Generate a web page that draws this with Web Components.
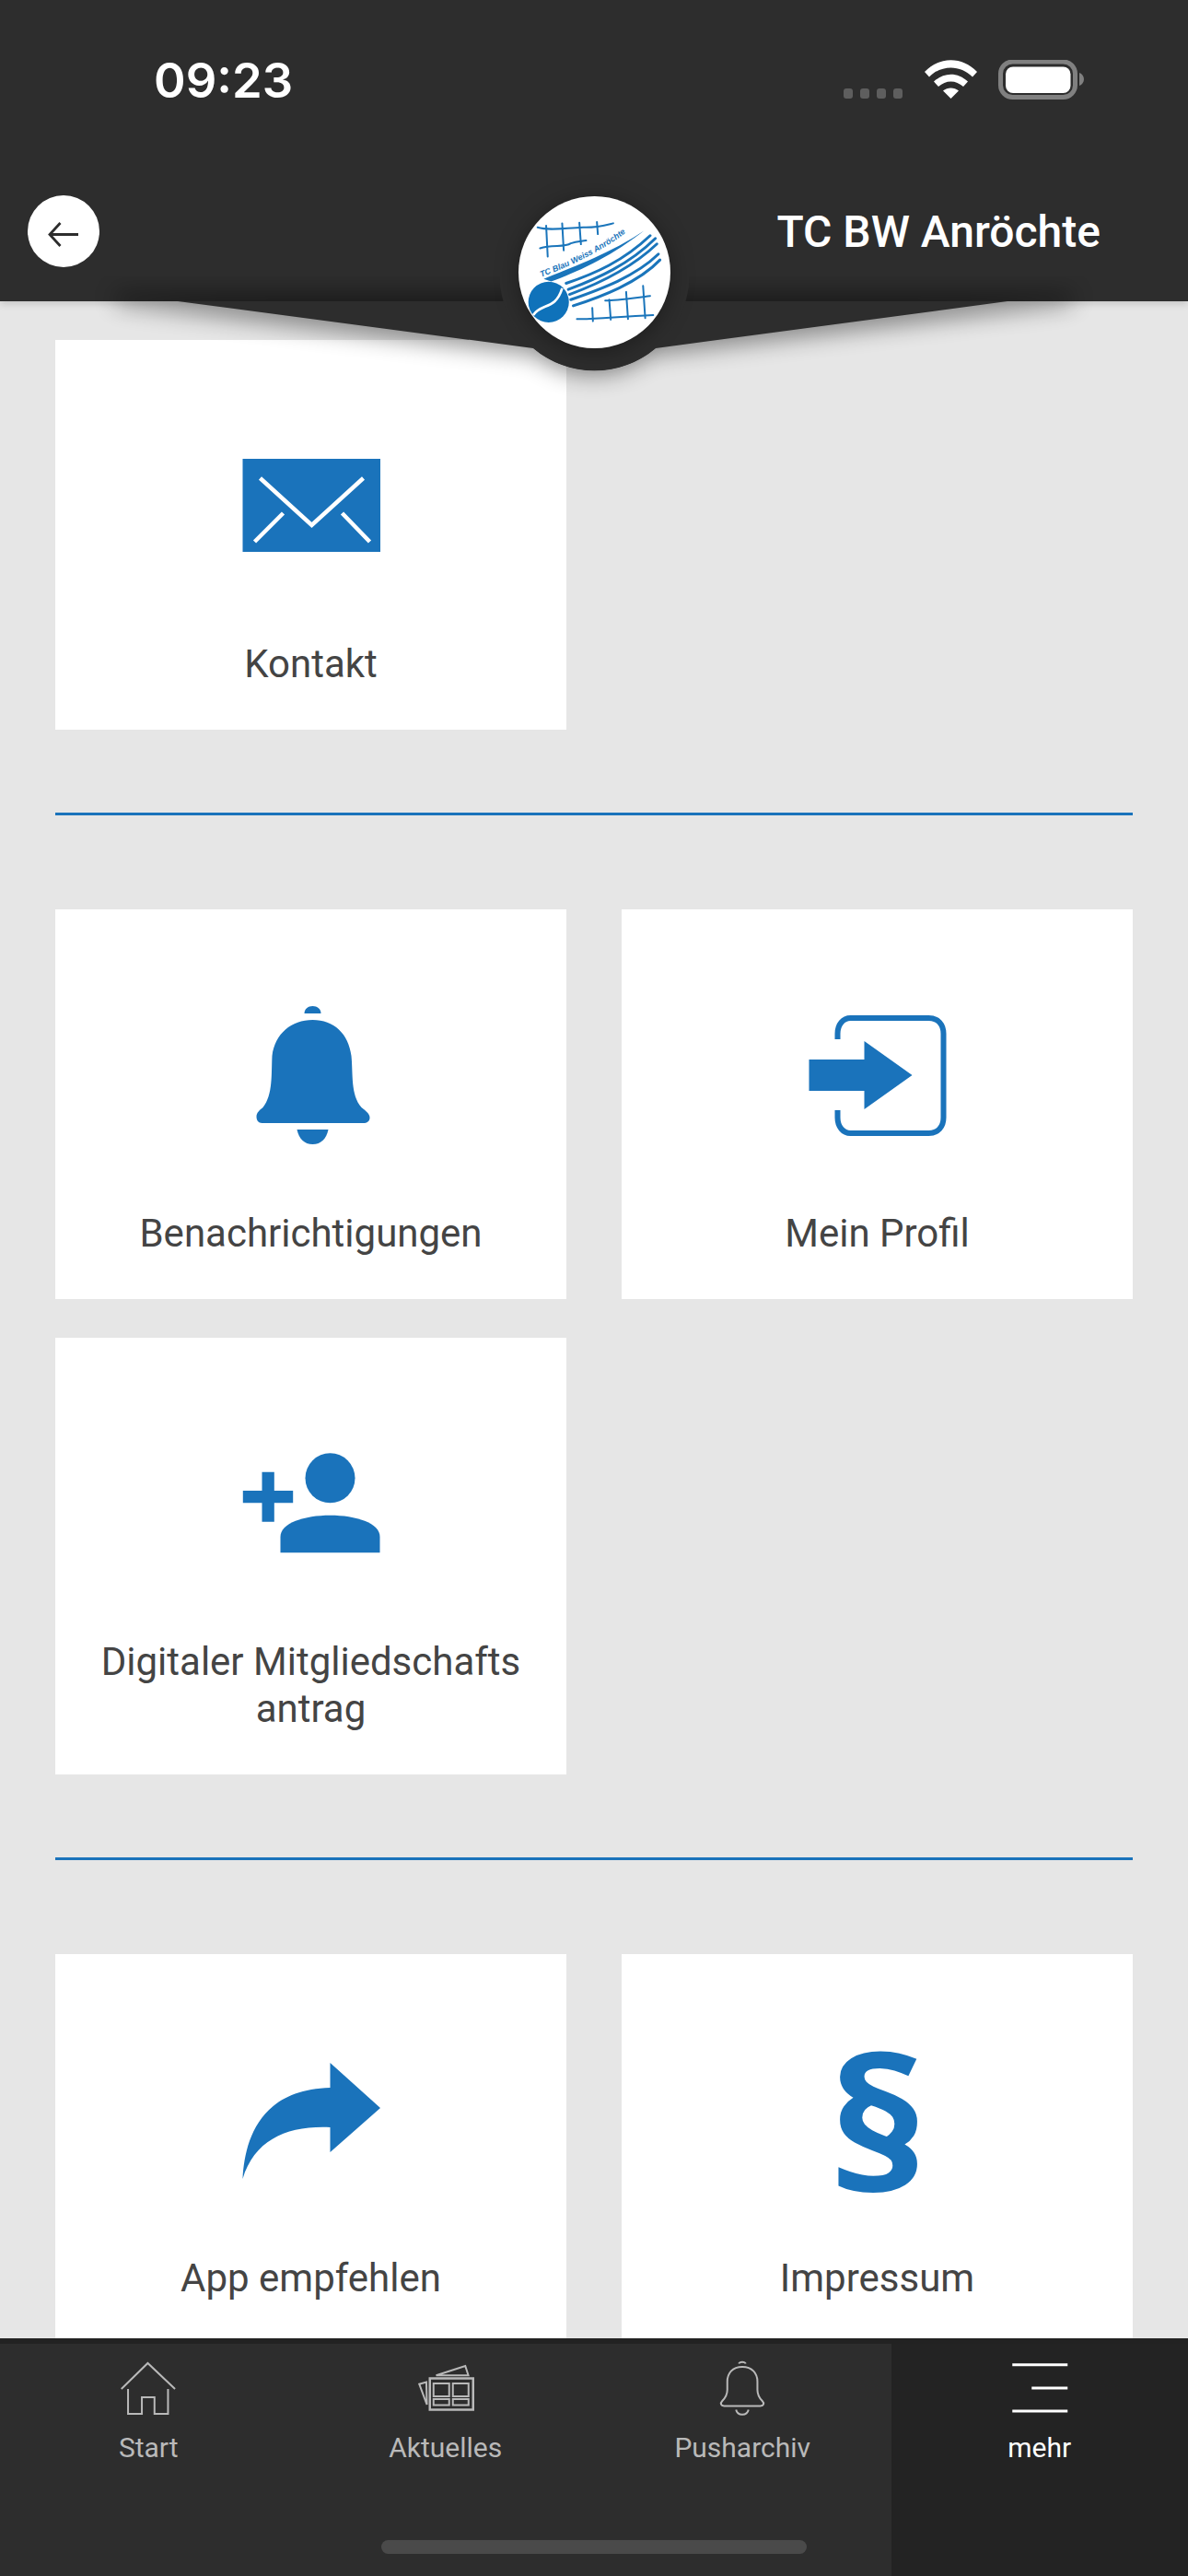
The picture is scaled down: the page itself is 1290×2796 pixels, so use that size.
<!DOCTYPE html>
<html lang="de">
<head>
<meta charset="utf-8">
<title>TC BW Anröchte</title>
<style>
    html, body { margin: 0; padding: 0; }
    body {
        width: 1290px;
        height: 2796px;
        overflow: hidden;
        background: #e6e6e6;
        font-family: Roboto, "Liberation Sans", sans-serif;
    }
    tile-card svg { display: block; width: 150px; height: 150px; }
    tile-card .glyph {
        display: block;
        width: 150px;
        height: 150px;
        text-align: center;
        color: #1a73bb;
        font: 700 198px/150px "Open Sans", sans-serif;
        transform: scaleX(1.12);
    }
</style>
</head>
<body>

<app-screen>
    <app-header slot="header" title-text="TC BW Anröchte"></app-header>

    <tile-grid>
        <tile-card>
            <svg slot="icon" viewBox="262.5 474 150 150">
                <rect x="263" y="498" width="150" height="101" fill="#1a73bb"/>
                <path d="M282 519 L338 570 L394 519 M276 588 L307 557 M401 588 L371 557" fill="none" stroke="#fff" stroke-width="4.5"/>
            </svg>
            Kontakt
        </tile-card>
    </tile-grid>
    <tile-divider></tile-divider>

    <tile-grid>
        <tile-card>
            <svg slot="icon" viewBox="262.5 1092 150 150" fill="#1a73bb">
                <path d="M330 1100 C330 1095 334 1092 339 1092 C344 1092 348 1095 348 1100 Z"/>
                <path d="M339 1107 C362 1107 378 1122 381 1146 C383 1166 380 1188 392 1202 C397 1206 401 1209 401 1213 C401 1217 398 1219 394 1219 L284 1219 C280 1219 278 1216 278 1212 C278 1208 281 1205 285 1202 C296 1188 294 1166 295 1146 C298 1122 316 1107 339 1107 Z"/>
                <path d="M322 1226 L356 1226 C354 1236 348 1242 339 1242 C330 1242 324 1236 322 1226 Z"/>
            </svg>
            Benachrichtigungen
        </tile-card>
        <tile-card>
            <svg slot="icon" viewBox="877.5 1092 150 150">
                <path d="M909 1128 L909 1122 C909 1112 915 1105 923 1105 L1008 1105 C1018 1105 1024 1112 1024 1122 L1024 1213 C1024 1223 1018 1230 1008 1230 L923 1230 C915 1230 909 1223 909 1213 L909 1205" fill="none" stroke="#1a73bb" stroke-width="6"/>
                <path d="M878 1150 L938 1150 L938 1130 L990 1167 L938 1204 L938 1184 L878 1184 Z" fill="#1a73bb"/>
            </svg>
            Mein Profil
        </tile-card>
        <tile-card>
            <svg slot="icon" viewBox="262.5 1557 150 150" fill="#1a73bb">
                <circle cx="358" cy="1604.3" r="27"/>
                <path d="M304 1685.3 L304 1668 C304 1653 330 1644.7 358 1644.7 C386 1644.7 412 1653 412 1668 L412 1685.3 Z"/>
                <path d="M263.3 1618 L284 1618 L284 1597.7 L297.3 1597.7 L297.3 1618 L317.7 1618 L317.7 1631.3 L297.3 1631.3 L297.3 1651.7 L284 1651.7 L284 1631.3 L263.3 1631.3 Z"/>
            </svg>
            Digitaler Mitgliedschafts<br>antrag
        </tile-card>
    </tile-grid>
    <tile-divider></tile-divider>

    <tile-grid>
        <tile-card>
            <svg slot="icon" viewBox="262.5 2226 150 150" fill="#1a73bb">
                <path d="M358 2239 L412.5 2288 L358 2336 L358 2309 C312 2307 276 2322 263 2365 C265 2325 280 2268 358 2266 Z"/>
            </svg>
            App empfehlen
        </tile-card>
        <tile-card>
            <span slot="icon" class="glyph">§</span>
            Impressum
        </tile-card>
    </tile-grid>

    <tab-bar slot="footer">
        <tab-item label="Start">
            <svg viewBox="129.25 2560 64 64" fill="none" stroke="#b9b9b9" stroke-width="2">
                <path d="M132 2593 L160.7 2565 L190.3 2593"/>
                <path d="M139.3 2593 L139.3 2620 L154.3 2620 L154.3 2602 L168 2602 L168 2620 L182.7 2620 L182.7 2593"/>
            </svg>
        </tab-item>
        <tab-item label="Aktuelles">
            <svg viewBox="451.75 2560 64 64" fill="none" stroke="#b9b9b9" stroke-width="2">
                <rect x="466.5" y="2581.5" width="47" height="34" stroke-width="2.5"/>
                <rect x="470.5" y="2587" width="17" height="14" stroke-width="2"/>
                <rect x="491.5" y="2587" width="17" height="14" stroke-width="2"/>
                <rect x="470.5" y="2604" width="17" height="6.5" stroke-width="2"/>
                <rect x="491.5" y="2604" width="17" height="6.5" stroke-width="2"/>
                <path d="M473.3 2578.3 L505 2568 L508.3 2578.3 Z"/>
                <path d="M463.3 2610 L455 2587.7 L462.7 2585.5 Z"/>
            </svg>
        </tab-item>
        <tab-item label="Pusharchiv">
            <svg viewBox="774.25 2560 64 64" fill="none" stroke="#b9b9b9" stroke-width="2">
                <path d="M802.5 2565.5 C803.5 2563 809 2563 810 2565.5"/>
                <path d="M806.3 2569 C817 2569 822.7 2576 822.7 2585 L822.7 2594 C822.7 2600 825 2603 828 2606 C830.5 2608.5 829.5 2611.5 826 2611.5 L786.5 2611.5 C783 2611.5 782 2608.5 784.5 2606 C787.5 2603 790 2600 790 2594 L790 2585 C790 2576 795.5 2569 806.3 2569 Z"/>
                <path d="M799.5 2615.5 C801 2622.5 811.5 2622.5 813 2615.5"/>
            </svg>
        </tab-item>
        <tab-item label="mehr" active>
            <svg viewBox="1096.75 2560 64 64" fill="none" stroke="#fff" stroke-width="3">
                <path d="M1099 2566.7 L1159 2566.7 M1120 2592 L1159 2592 M1099 2617 L1159 2617"/>
            </svg>
        </tab-item>
    </tab-bar>
</app-screen>

<script>
const screenTemplate = document.createElement('template');
screenTemplate.innerHTML = `
    <style>
        :host {
            display: flex;
            flex-direction: column;
            width: 1290px;
            height: 2796px;
            overflow: hidden;
            background: #e6e6e6;
        }
        main {
            flex: 1;
            min-height: 0;
            overflow: hidden;
            padding: 42px 60px 0;
        }
    </style>
    <slot name="header"></slot>
    <main><slot></slot></main>
    <slot name="footer"></slot>
`;

class AppScreen extends HTMLElement {
    constructor() {
        super();
        this.attachShadow({ mode: 'open' })
            .appendChild(screenTemplate.content.cloneNode(true));
    }
}

const headerTemplate = document.createElement('template');
headerTemplate.innerHTML = `
    <style>
        :host {
            display: block;
            position: relative;
            z-index: 10;
            height: 327px;
            background: #2d2d2d;
            color: #fff;
            box-shadow: 0 3px 8px rgba(0, 0, 0, .15);
        }
        .status {
            height: 174px;
            display: flex;
            align-items: center;
            justify-content: space-between;
            padding: 0 113px 0 167px;
        }
        .time {
            font: 600 52.5px/1 Inter, "Liberation Sans", sans-serif;
        }
        .status svg { display: block; width: 261px; height: 44px; }
        .bar {
            height: 153px;
            display: flex;
            align-items: center;
            justify-content: space-between;
            padding: 0 95px 0 30px;
        }
        .back {
            width: 78px;
            height: 78px;
            border-radius: 50%;
            background: #fff;
            display: grid;
            place-content: center;
        }
        .back svg { display: block; width: 36px; height: 36px; }
        .title {
            font: 500 48px/1 Roboto, "Liberation Sans", sans-serif;
            padding-top: 3px;
        }
        .notch {
            position: absolute;
            left: 0;
            top: 300px;
            width: 1290px;
            height: 160px;
            pointer-events: none;
        }
        .logo {
            position: absolute;
            left: 563px;
            top: 213px;
            width: 165px;
            height: 165px;
            border-radius: 50%;
            background: #fff;
            box-shadow: 0 4px 26px rgba(0, 0, 0, .35);
        }
        .logo svg { display: block; width: 165px; height: 165px; }
        .logo text {
            font: italic 700 27px "Liberation Sans", sans-serif;
            fill: #1a75bb;
        }
    </style>
    <div class="status">
        <span class="time">09:23</span>
        <svg viewBox="916 65 261 44">
            <g fill="#5e5e5e">
                <rect x="916" y="96" width="10" height="11" rx="3"/>
                <rect x="934" y="96" width="10" height="11" rx="3"/>
                <rect x="952" y="96" width="10" height="11" rx="3"/>
                <rect x="970" y="96" width="10" height="11" rx="3"/>
            </g>
            <path fill="#fff" d="M1004 78 C1020 61 1045 61 1061 78 L1056 83.5 C1043 70 1022 70 1009 83.5 Z"/>
            <path fill="#fff" d="M1014 88.5 C1025 78 1040 78 1051 88.5 L1046 94 C1038 86.5 1027 86.5 1019 94 Z"/>
            <path fill="#fff" d="M1024 98.5 C1029 94.5 1036 94.5 1041 98.5 L1032.5 107 Z"/>
            <rect x="1086.5" y="67" width="81" height="38.5" rx="13" fill="none" stroke="#808080" stroke-width="5"/>
            <rect x="1092" y="72.5" width="70.5" height="28.5" rx="8" fill="#fff"/>
            <path fill="#808080" d="M1172 79 C1175 80 1177 83 1177 86 C1177 89 1175 92 1172 93 Z"/>
        </svg>
    </div>
    <div class="bar">
        <div class="back">
            <svg viewBox="0 0 36 36" fill="none" stroke="#2d2d2d" stroke-width="2.8">
                <path d="M34 21.5 L4 21.5 M14.5 9 L3 21.5 L14.5 34"/>
            </svg>
        </div>
        <span class="title"></span>
    </div>
    <svg class="notch" viewBox="0 300 1290 160">
        <defs>
            <filter id="soft" x="-10%" y="-50%" width="120%" height="200%">
                <feGaussianBlur stdDeviation="12"/>
            </filter>
        </defs>
        <path d="M125 318 L1165 318 L1165 330 L707 386 A103 103 0 0 1 580 386 L125 330 Z" fill="#000" opacity=".4" filter="url(#soft)"/>
        <path d="M193 327 L1094 327 L712 378 A103 103 0 0 1 579 378 Z" fill="#2d2d2d"/>
        <circle cx="645.5" cy="299" r="103" fill="#2d2d2d"/>
    </svg>
    <div class="logo">
        <svg viewBox="130 69 494 494">
            <circle cx="228" cy="413" r="66" fill="#0f72ba"/>
            <path d="M178 455 C205 415 250 440 272 368" fill="none" stroke="#fff" stroke-width="8"/>
            <g fill="none" stroke="#1a75bb" stroke-width="6" stroke-linecap="round">
                <path d="M192 170 C230 182 280 172 340 170 C380 172 405 165 438 157"/>
                <path d="M200 238 C240 225 280 236 300 222 C320 215 335 216 350 213"/>
                <path d="M220 165 L225 265 M272 157 L277 245 M328 155 L333 225 M385 153 L388 192"/>
                <path d="M320 468 C380 470 450 460 568 455"/>
                <path d="M412 408 C450 408 500 400 558 393"/>
                <path d="M370 432 L372 475 M425 405 L430 470 M480 380 L486 468 M535 360 L542 465"/>
            </g>
            <path fill="#1a75bb" d="M212 338 C300 300 420 260 538 181 C430 266 320 316 236 346 Z"/>
            <g fill="none" stroke="#1a75bb" stroke-width="9" stroke-linecap="round">
                <path d="M285 352 C380 320 470 280 558 197"/>
                <path d="M292 372 C390 335 490 290 575 206"/>
                <path d="M296 388 C400 350 500 300 580 224"/>
                <path d="M300 405 C400 370 510 330 585 257"/>
                <path d="M308 425 C400 395 520 350 590 276"/>
            </g>
            <path id="arc" d="M204 332 C300 295 410 245 498 172" fill="none"/>
            <text><textPath href="#arc">TC Blau Weiss Anröchte</textPath></text>
        </svg>
    </div>
`;

class AppHeader extends HTMLElement {
    constructor() {
        super();
        this.attachShadow({ mode: 'open' })
            .appendChild(headerTemplate.content.cloneNode(true));
    }

    connectedCallback() {
        this.shadowRoot.querySelector('.title').textContent = this.getAttribute('title-text');
    }
}

const gridTemplate = document.createElement('template');
gridTemplate.innerHTML = `
    <style>
        :host {
            display: grid;
            grid-template-columns: 555px 555px;
            gap: 42px 60px;
        }
    </style>
    <slot></slot>
`;

class TileGrid extends HTMLElement {
    constructor() {
        super();
        this.attachShadow({ mode: 'open' })
            .appendChild(gridTemplate.content.cloneNode(true));
    }
}

const dividerTemplate = document.createElement('template');
dividerTemplate.innerHTML = `
    <style>
        :host {
            display: block;
            height: 3px;
            margin: 90px 0 102px;
            background: #1a73bb;
        }
    </style>
`;

class TileDivider extends HTMLElement {
    constructor() {
        super();
        this.attachShadow({ mode: 'open' })
            .appendChild(dividerTemplate.content.cloneNode(true));
    }
}

const cardTemplate = document.createElement('template');
cardTemplate.innerHTML = `
    <style>
        :host {
            display: flex;
            flex-direction: column;
            align-items: center;
            box-sizing: border-box;
            padding: 105px 0 46px;
            background: #fff;
            color: #444;
            font: 400 42px/51px Roboto, "Liberation Sans", sans-serif;
            text-align: center;
        }
        .icon { height: 150px; margin-bottom: 71px; }
    </style>
    <div class="icon"><slot name="icon"></slot></div>
    <div class="label"><slot></slot></div>
`;

class TileCard extends HTMLElement {
    constructor() {
        super();
        this.attachShadow({ mode: 'open' })
            .appendChild(cardTemplate.content.cloneNode(true));
    }
}

const tabBarTemplate = document.createElement('template');
tabBarTemplate.innerHTML = `
    <style>
        :host {
            display: grid;
            grid-template-columns: repeat(4, 1fr);
            position: relative;
            z-index: 5;
            height: 258px;
            box-sizing: border-box;
            border-top: 6px solid #222;
            background: #2d2d2d;
        }
        .home {
            position: absolute;
            left: 414px;
            bottom: 24px;
            width: 462px;
            height: 15px;
            border-radius: 8px;
            background: #4a4a4a;
        }
    </style>
    <slot></slot>
    <div class="home"></div>
`;

class TabBar extends HTMLElement {
    constructor() {
        super();
        this.attachShadow({ mode: 'open' })
            .appendChild(tabBarTemplate.content.cloneNode(true));
    }
}

const tabItemTemplate = document.createElement('template');
tabItemTemplate.innerHTML = `
    <style>
        :host {
            display: flex;
            flex-direction: column;
            align-items: center;
            padding-top: 16px;
            color: #b9b9b9;
            font: 400 30px/36px Roboto, "Liberation Sans", sans-serif;
        }
        :host([active]) {
            background: #232323;
            color: #fff;
        }
        ::slotted(svg) { display: block; width: 64px; height: 64px; }
        span { margin-top: 15px; }
    </style>
    <slot></slot>
    <span></span>
`;

class TabItem extends HTMLElement {
    constructor() {
        super();
        this.attachShadow({ mode: 'open' })
            .appendChild(tabItemTemplate.content.cloneNode(true));
    }

    connectedCallback() {
        this.shadowRoot.querySelector('span').textContent = this.getAttribute('label');
    }
}

customElements.define('app-screen', AppScreen);
customElements.define('app-header', AppHeader);
customElements.define('tile-grid', TileGrid);
customElements.define('tile-divider', TileDivider);
customElements.define('tile-card', TileCard);
customElements.define('tab-bar', TabBar);
customElements.define('tab-item', TabItem);
</script>
</body>
</html>
